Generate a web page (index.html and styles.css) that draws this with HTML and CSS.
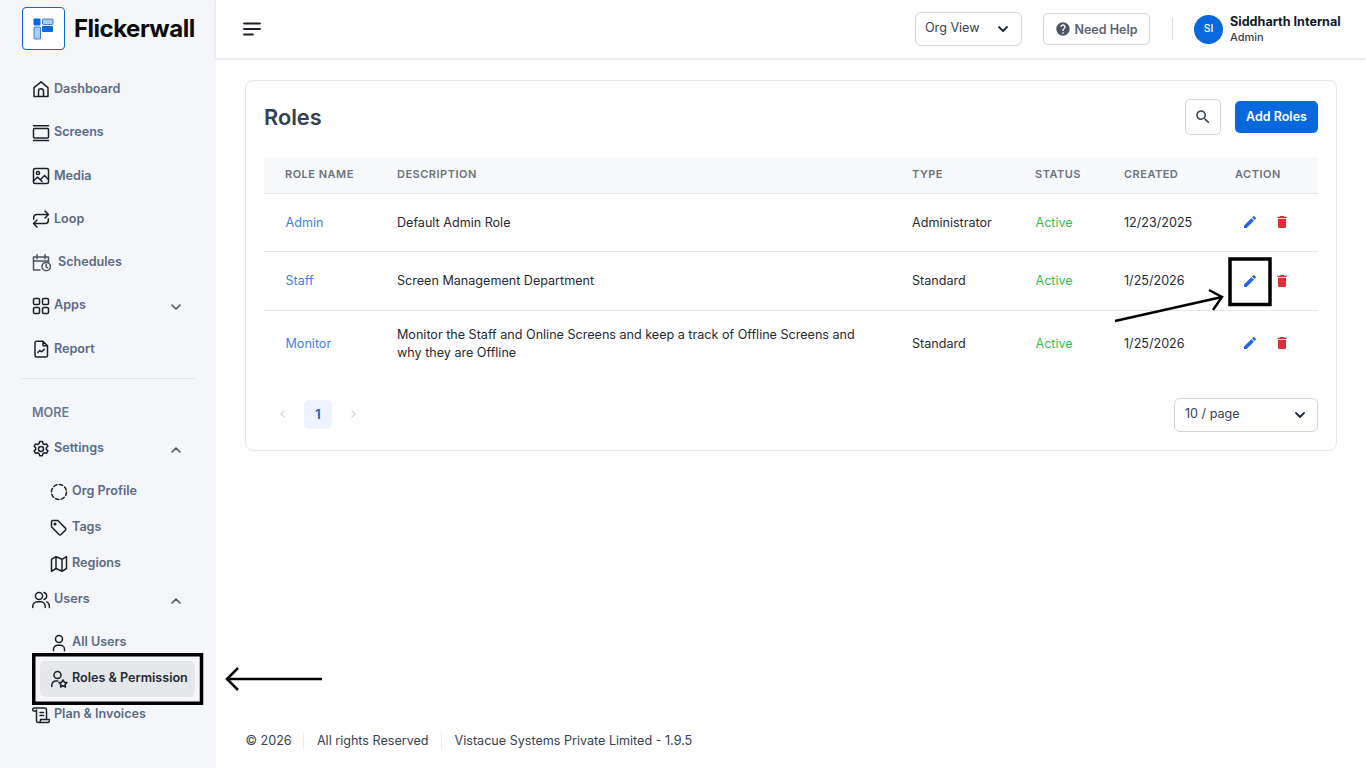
FILE: index.html
```html
<!DOCTYPE html>
<html lang="en">
<head>
<meta charset="utf-8">
<title>Flickerwall - Roles</title>
<link rel="stylesheet" href="styles.css">
</head>
<body>
<div class="app">
  <aside class="sidebar">
    <div class="brand">
      <div class="logo-box">
        <svg width="21" height="22" viewBox="0 0 21 22">
          <rect x="0.5" y="0.5" width="7" height="7" rx="1" fill="#0a68de"/>
          <rect x="1" y="9" width="6.5" height="12" rx="1" fill="#a9cdf6" stroke="#0a68de" stroke-width="0.8"/>
          <rect x="9.5" y="1" width="10.5" height="5.5" rx="1" fill="#a9cdf6" stroke="#0a68de" stroke-width="0.8"/>
          <rect x="9" y="8" width="11" height="6" rx="1" fill="#0a68de"/>
        </svg>
      </div>
      <span class="brand-name">Flickerwall</span>
    </div>
    <nav class="nav-main">
      <a class="nav-item">
        <svg class="ico" viewBox="0 0 18 18"><path d="M2 16.5V7.6L9 1.8l7 5.8v8.9zM6.5 16.5v-5.2a2.5 2.5 0 0 1 5 0v5.2"/></svg>
        <span>Dashboard</span>
      </a>
      <a class="nav-item">
        <svg class="ico" viewBox="0 0 18 18"><rect x="1.5" y="4.5" width="15" height="9.5" rx="1"/><path d="M1.5 1.8h15M1.5 16.4h15"/></svg>
        <span>Screens</span>
      </a>
      <a class="nav-item">
        <svg class="ico" viewBox="0 0 18 18"><rect x="1.5" y="1.5" width="15" height="15" rx="1.5"/><circle cx="6" cy="6" r="1.6"/><path d="M1.5 14l4-4 4.5 4.500M9 12l3.500-3.500 4 4"/></svg>
        <span>Media</span>
      </a>
      <a class="nav-item">
        <svg class="ico" viewBox="0 0 18 18"><path d="M1.700 9.200V7.500a3 3 0 0 1 3-3h11.800M13 1l3.500 3.500L13 8M16.300 8.800v1.700a3 3 0 0 1-3 3H1.500M5 10l-3.500 3.500L5 17"/></svg>
        <span>Loop</span>
      </a>
      <a class="nav-item">
        <svg class="ico ico-sched" viewBox="0 0 20 18"><path d="M8 16H1.500V3h15v5M1.500 7h15M5 .8v4M13 .8v4"/><circle cx="14.200" cy="12.600" r="4.200"/><path d="M14.200 10.500v2.300l1.500 1"/></svg>
        <span>Schedules</span>
      </a>
      <a class="nav-item">
        <svg class="ico" viewBox="0 0 18 18"><rect x="1.500" y="1.500" width="6" height="6" rx="1.300"/><rect x="10.500" y="1.500" width="6" height="6" rx="1.300"/><rect x="1.500" y="10.500" width="6" height="6" rx="1.300"/><rect x="10.500" y="10.500" width="6" height="6" rx="1.300"/></svg>
        <span class="grow">Apps</span>
        <svg class="chev" viewBox="0 0 10 6"><path d="M1 1l4 4 4-4"/></svg>
      </a>
      <a class="nav-item">
        <svg class="ico" viewBox="0 0 18 18"><path d="M3 2.800A1.500 1.500 0 0 1 4.500 1.300H11l4.500 4.500v10A1.500 1.500 0 0 1 14 17H4.500A1.500 1.500 0 0 1 3 15.500zM11 1.300v4.500h4.500M5.800 12.500l2-2 1.500 1.300 3-2.500"/></svg>
        <span>Report</span>
      </a>
    </nav>
    <div class="nav-rule"></div>
    <div class="nav-label">MORE</div>
    <a class="nav-row">
      <svg class="ico" viewBox="0 0 18 18"><path d="M7.600 1.500h2.800l.5 2.100 1.500.9 2.100-.6 1.400 2.400-1.600 1.500v1.600l1.600 1.500-1.400 2.400-2.100-.6-1.500.9-.5 2.100H7.600l-.5-2.100-1.500-.9-2.100.6-1.400-2.400 1.600-1.500V7.800L2.100 6.300l1.400-2.400 2.100.6 1.500-.9z"/><circle cx="9" cy="9" r="2.500"/></svg>
      <span class="grow">Settings</span>
      <svg class="chev" viewBox="0 0 10 6"><path d="M1 5l4-4 4 4"/></svg>
    </a>
    <div class="subnav">
      <a class="sub-item">
        <svg class="ico" viewBox="0 0 18 18"><circle class="dash" cx="9" cy="9" r="7.500"/></svg>
        <span>Org Profile</span>
      </a>
      <a class="sub-item">
        <svg class="ico" viewBox="0 0 18 18"><path d="M1.500 2.800a1.300 1.300 0 0 1 1.300-1.300h5l7.600 7.600a1.500 1.500 0 0 1 0 2.100l-4.300 4.300a1.500 1.500 0 0 1-2.100 0L1.500 7.800z"/><circle class="dot" cx="5" cy="5" r=".8"/></svg>
        <span>Tags</span>
      </a>
      <a class="sub-item">
        <svg class="ico" viewBox="0 0 18 18"><path d="M1.500 4.300l4.500-2.600 6 2.600 4.500-2.600v11.800L12 16.300l-6-2.800-4.500 2.800zM6 1.700v11.800M12 4.300v12"/></svg>
        <span>Regions</span>
      </a>
    </div>
    <a class="nav-row">
      <svg class="ico" viewBox="0 0 18 18"><circle cx="7" cy="5" r="3.500"/><path d="M.8 16.500v-1.300a4.500 4.500 0 0 1 4.500-4.500h3.400a4.500 4.500 0 0 1 4.500 4.500v1.300M12 1.600a3.500 3.500 0 0 1 0 6.800M14.700 10.900a4.500 4.500 0 0 1 2.700 4.200v1.400"/></svg>
      <span class="grow">Users</span>
      <svg class="chev" viewBox="0 0 10 6"><path d="M1 5l4-4 4 4"/></svg>
    </a>
    <div class="subnav">
      <a class="sub-item">
        <svg class="ico" viewBox="0 0 18 18"><circle cx="9" cy="5" r="3.500"/><path d="M3.500 16.800v-1.500a4 4 0 0 1 4-4h3a4 4 0 0 1 4 4v1.500"/></svg>
        <span>All Users</span>
      </a>
      <a class="sub-item is-active">
        <svg class="ico" viewBox="0 0 18 18"><circle cx="7.500" cy="5" r="3.500"/><path d="M1.800 16.500v-1.500a4 4 0 0 1 4-4h2M13 9.800l1.300 2.400 2.600.4-1.900 1.800.5 2.600-2.500-1.200-2.500 1.200.5-2.600-1.900-1.800 2.600-.4z"/></svg>
        <span>Roles &amp; Permission</span>
      </a>
    </div>
    <a class="nav-row">
      <svg class="ico" viewBox="0 0 18 18"><path d="M2 2h10.500a2 2 0 0 1 2 2v9M2 2a1.500 1.500 0 0 0-1 2.500l.5.5H4.500M4.500 4v10.500a2 2 0 0 0 2 2h9a2 2 0 0 0 2-2v-1H8.500v1a2 2 0 0 1-2 2M8 6.500h3.500M8 9.500h3.500"/></svg>
      <span>Plan &amp; Invoices</span>
    </a>
  </aside>

  <div class="main">
    <header class="topbar">
      <svg class="burger" width="18" height="14" viewBox="0 0 18 14"><path d="M1 1.500h16M1 7h16M1 12.500h9"/></svg>
      <div class="topbar-right">
        <div class="select org-select"><span>Org View</span><svg class="chev-dark" viewBox="0 0 10 6"><path d="M1 1l4 4 4-4"/></svg></div>
        <button class="help-btn"><svg width="16" height="16" viewBox="0 0 24 24"><path fill="#4b5563" d="M12 2C6.480 2 2 6.480 2 12s4.480 10 10 10 10-4.480 10-10S17.520 2 12 2zm1 17h-2v-2h2v2zm2.070-7.750l-.9.920C13.450 12.900 13 13.500 13 15h-2v-.5c0-1.100.45-2.100 1.170-2.830l1.240-1.260c.37-.36.59-.86.59-1.410 0-1.100-.9-2-2-2s-2 .9-2 2H8c0-2.210 1.790-4 4-4s4 1.790 4 4c0 .88-.36 1.680-.93 2.250z"/></svg>Need Help</button>
        <div class="top-rule"></div>
        <div class="user">
          <div class="avatar">SI</div>
          <div class="user-text">
            <div class="user-name">Siddharth Internal</div>
            <div class="user-role">Admin</div>
          </div>
        </div>
      </div>
    </header>

    <section class="card">
      <div class="card-head">
        <h1 class="title">Roles</h1>
        <button class="search-btn"><svg width="18" height="18" viewBox="0 0 24 24"><path fill="#374151" d="M15.500 14h-.79l-.28-.27C15.410 12.590 16 11.110 16 9.500 16 5.910 13.090 3 9.500 3S3 5.910 3 9.500 5.910 16 9.500 16c1.610 0 3.090-.59 4.230-1.570l.27.28v.79l5 4.990L20.490 19l-4.990-5zm-6 0C7.010 14 5 11.990 5 9.500S7.010 5 9.500 5 14 7.010 14 9.500 11.990 14 9.500 14z"/></svg></button>
        <button class="add-btn">Add Roles</button>
      </div>
      <table class="roles">
        <thead>
          <tr>
            <th class="c-name">Role Name</th>
            <th class="c-desc">Description</th>
            <th class="c-type">Type</th>
            <th class="c-status">Status</th>
            <th class="c-created">Created</th>
            <th class="c-action">Action</th>
          </tr>
        </thead>
        <tbody>
          <tr class="r1">
            <td class="link">Admin</td><td>Default Admin Role</td><td>Administrator</td><td class="active">Active</td><td>12/23/2025</td>
            <td><div class="actions"><svg width="16" height="16" viewBox="0 0 24 24"><path fill="#2563eb" d="M3 17.250V21h3.750L17.810 9.940l-3.750-3.750L3 17.250zM20.710 7.040c.39-.39.39-1.020 0-1.410l-2.340-2.340c-.39-.39-1.020-.39-1.410 0l-1.830 1.830 3.750 3.750 1.830-1.830z"/></svg><svg width="16" height="16" viewBox="0 0 24 24"><path fill="#dc2f3a" d="M6 19c0 1.100.9 2 2 2h8c1.100 0 2-.9 2-2V7H6v12zM19 4h-3.500l-1-1h-5l-1 1H5v2h14V4z"/></svg></div></td>
          </tr>
          <tr class="r2">
            <td class="link">Staff</td><td>Screen Management Department</td><td>Standard</td><td class="active">Active</td><td>1/25/2026</td>
            <td><div class="actions"><svg width="16" height="16" viewBox="0 0 24 24"><path fill="#2563eb" d="M3 17.250V21h3.750L17.810 9.940l-3.750-3.750L3 17.250zM20.710 7.040c.39-.39.39-1.020 0-1.410l-2.340-2.340c-.39-.39-1.020-.39-1.410 0l-1.830 1.830 3.750 3.750 1.830-1.830z"/></svg><svg width="16" height="16" viewBox="0 0 24 24"><path fill="#dc2f3a" d="M6 19c0 1.100.9 2 2 2h8c1.100 0 2-.9 2-2V7H6v12zM19 4h-3.500l-1-1h-5l-1 1H5v2h14V4z"/></svg></div></td>
          </tr>
          <tr class="r3">
            <td class="link">Monitor</td><td>Monitor the Staff and Online Screens and keep a track of Offline Screens and why they are Offline</td><td>Standard</td><td class="active">Active</td><td>1/25/2026</td>
            <td><div class="actions"><svg width="16" height="16" viewBox="0 0 24 24"><path fill="#2563eb" d="M3 17.250V21h3.750L17.810 9.940l-3.750-3.750L3 17.250zM20.710 7.040c.39-.39.39-1.020 0-1.410l-2.340-2.340c-.39-.39-1.020-.39-1.410 0l-1.830 1.830 3.750 3.750 1.830-1.830z"/></svg><svg width="16" height="16" viewBox="0 0 24 24"><path fill="#dc2f3a" d="M6 19c0 1.100.9 2 2 2h8c1.100 0 2-.9 2-2V7H6v12zM19 4h-3.500l-1-1h-5l-1 1H5v2h14V4z"/></svg></div></td>
          </tr>
        </tbody>
      </table>
      <div class="pager-row">
        <div class="pager">
          <svg class="pg-arrow" viewBox="0 0 6 10"><path d="M5 1L1 5l4 4"/></svg>
          <span class="pg-num">1</span>
          <svg class="pg-arrow" viewBox="0 0 6 10"><path d="M1 1l4 4-4 4"/></svg>
        </div>
        <div class="select page-select"><span>10 / page</span><svg class="chev-dark" viewBox="0 0 10 6"><path d="M1 1l4 4 4-4"/></svg></div>
      </div>
    </section>

    <footer class="footer">
      <span class="f-a">© 2026</span>
      <span class="f-b">All rights Reserved</span>
      <span class="f-c">Vistacue Systems Private Limited - 1.9.5</span>
    </footer>
  </div>
</div>

<svg class="marks" width="1366" height="768" viewBox="0 0 1366 768">
  <rect x="33.750" y="654.750" width="167.750" height="48.500"/>
  <rect x="1230" y="259" width="40" height="45.500"/>
  <path d="M322 679H228M238 668l-11 11 11 11"/>
  <path d="M1115 321l107-24M1209 290l13 7-9 13"/>
</svg>
</body>
</html>
```

FILE: styles.css
```css
* { box-sizing: border-box; }
html, body { margin: 0; padding: 0; height: 768px; overflow: hidden; background: #fff; }
body { font-family: Inter, "Liberation Sans", sans-serif; font-size: 12.580px; color: #1f2937; position: relative; }

.app { display: flex; width: 1366px; height: 768px; }

/* Sidebar */
.sidebar { width: 216px; flex: none; background: #f5f6f9; padding: 7px 21px 0 22px; display: flex; flex-direction: column; font-size: 12.600px; }
.brand { display: flex; align-items: center; gap: 9px; height: 43px; margin-bottom: 17.700px; }
.logo-box { width: 43px; height: 43px; border: 1px solid #0a68de; border-radius: 4px; background: #fff; display: flex; align-items: center; justify-content: center; }
.brand-name { font-size: 24px; font-weight: 700; color: #0a0a0a; letter-spacing: -0.5px; }

.ico { width: 18px; height: 18px; flex: none; fill: none; stroke: #1c2027; stroke-width: 1.500; stroke-linecap: round; stroke-linejoin: round; }
.ico-sched { width: 20px; stroke: #4b5563; margin-right: 2px; }
.ico .dash { stroke-dasharray: 3.500 2.400; }
.ico .dot { fill: #1c2027; }
.chev { width: 10px; height: 6px; fill: none; stroke: #4b5563; stroke-width: 1.600; stroke-linecap: round; stroke-linejoin: round; margin-top: 3px; margin-right: 14px; }
.grow { flex: 1; }

.nav-item, .nav-row { display: flex; align-items: center; gap: 4px; padding-left: 10px; font-weight: 600; color: #5a6a85; }
.nav-item { height: 43.330px; }
.nav-row { height: 36px; }
.nav-item span, .nav-row span, .sub-item span { position: relative; top: -1px; }

.nav-rule { height: 1px; background: #e4e6ea; margin-top: 6.800px; }
.nav-label { height: 52px; padding: 26px 0 0 10px; font-weight: 600; color: #6b7a94; line-height: 16px; }

.subnav { display: flex; flex-direction: column; margin-top: 7px; }
.sub-item { height: 36px; display: flex; align-items: center; gap: 4px; padding-left: 28px; font-weight: 600; color: #5a6a85; border-radius: 6px; }
.sub-item.is-active { background: #e6e7eb; color: #1f2937; margin-left: 18px; padding-left: 10px; width: 155px; }

/* Main column */
.main { flex: 1; min-width: 0; display: flex; flex-direction: column; }
.topbar { height: 58px; flex: none; display: flex; align-items: center; justify-content: space-between; padding: 0 24px 0 27px; background: #fff; box-shadow: 0 1px 3px rgba(0, 0, 0, .14); position: relative; }
.burger { fill: none; stroke: #1c2027; stroke-width: 1.800; stroke-linecap: round; }
.topbar-right { display: flex; align-items: center; }

.select { display: flex; align-items: center; justify-content: space-between; background: #fff; border: 1px solid #d1d5e0; border-radius: 6px; color: #344054; }
.org-select { width: 107px; height: 34px; padding: 0 13px 4px 9px; }
.page-select { width: 144px; height: 34px; padding: 0 12px 4px 10px; }
.chev-dark { width: 10px; height: 6px; margin-top: 4px; fill: none; stroke: #1f2937; stroke-width: 1.800; stroke-linecap: round; stroke-linejoin: round; }

.help-btn { width: 107px; height: 32px; margin-left: 21px; display: flex; align-items: center; justify-content: center; gap: 3px; padding: 0; background: #fff; border: 1px solid #d1d5e0; border-radius: 5px; font: 600 12.500px Inter, sans-serif; color: #5b6472; }
.top-rule { width: 1px; height: 22px; background: #d9dbe0; margin: 0 21px 0 22px; }
.user { display: flex; align-items: center; gap: 7px; }
.avatar { width: 29px; height: 29px; border-radius: 50%; background: #0a68de; color: #fff; font-size: 10.500px; font-weight: 500; display: flex; align-items: center; justify-content: center; padding-bottom: 2px; }
.user-text { margin-top: -1px; width: 112px; }
.user-name { font-size: 12.600px; font-weight: 700; color: #111827; line-height: 17px; white-space: nowrap; }
.user-role { font-size: 11px; color: #374151; line-height: 15px; font-weight: 500; }

/* Card */
.card { margin: 22px 29px 0; height: 371px; flex: none; border: 1px solid #e6e8ec; border-radius: 8px; padding: 17px 18px 0; }
.card-head { display: flex; align-items: center; height: 37px; margin-bottom: 22px; }
.title { flex: 1; margin: 0; font-size: 21.750px; font-weight: 600; color: #344054; }
.search-btn { width: 36px; height: 36px; display: flex; align-items: center; justify-content: center; padding: 0; background: #fff; border: 1px solid #d1d5e0; border-radius: 5px; }
.add-btn { width: 83px; height: 32px; margin-left: 14px; background: #0a68de; color: #fff; border: 0; border-radius: 5px; font: 600 12.500px Inter, sans-serif; padding: 0; }

.roles { width: 1054px; table-layout: fixed; border-collapse: collapse; }
.roles th { height: 36px; padding: 0 0 2px 21px; background: #f8f9fb; border-bottom: 1px solid #e6e8ec; text-align: left; font-size: 11px; font-weight: 600; letter-spacing: 0.045em; text-transform: uppercase; color: #6b7280; }
.c-name { width: 112px; }
.c-desc { width: 515px; }
.c-type { width: 123px; }
.c-status { width: 89px; }
.c-created { width: 111px; }
.c-action { width: 104px; }
.roles td { padding: 0 21px; line-height: 18px; color: #1f2937; border-bottom: 1px solid #e6e8ec; }
.roles td:last-child { padding-right: 0; }
.roles .r1 td { height: 58px; padding-top: 2px; }
.roles .r2 td { height: 59px; }
.roles .r3 td { height: 65px; padding-top: 2px; border-bottom: 0; }
.roles td.link { color: #3f7ff0; padding-left: 21.500px; }
.roles td.active { color: #2fbf5a; padding-left: 21.500px; }
.actions { display: flex; align-items: center; gap: 16px; margin: -2px 0 0 7px; }
.roles .r2 .actions { margin-top: 0; }

.pager-row { display: flex; align-items: center; justify-content: space-between; margin-top: 23px; }
.pager { display: flex; align-items: center; padding: 0 0 2px 16px; gap: 19px; }
.pg-arrow { width: 5px; height: 8px; fill: none; stroke: #d0d4de; stroke-width: 1.500; stroke-linecap: round; stroke-linejoin: round; }
.pg-num { width: 28px; height: 29px; border-radius: 5px; background: #edf4ff; color: #2f5fc4; font-weight: 700; display: flex; align-items: center; justify-content: center; }

/* Footer */
.footer { margin-top: auto; height: 36px; flex: none; padding-left: 29.500px; display: flex; align-items: flex-start; color: #374151; line-height: 18px; }
.f-a { padding-right: 11.800px; border-right: 1px solid #eceef1; }
.f-b { padding: 0 12.500px; border-right: 1px solid #eceef1; }
.f-c { padding-left: 12.500px; }

/* Hand-drawn annotation marks lying over the page */
.marks { position: absolute; left: 0; top: 0; pointer-events: none; fill: none; stroke: #000; stroke-width: 2.500; }
.marks rect { stroke-width: 3.500; }
```
